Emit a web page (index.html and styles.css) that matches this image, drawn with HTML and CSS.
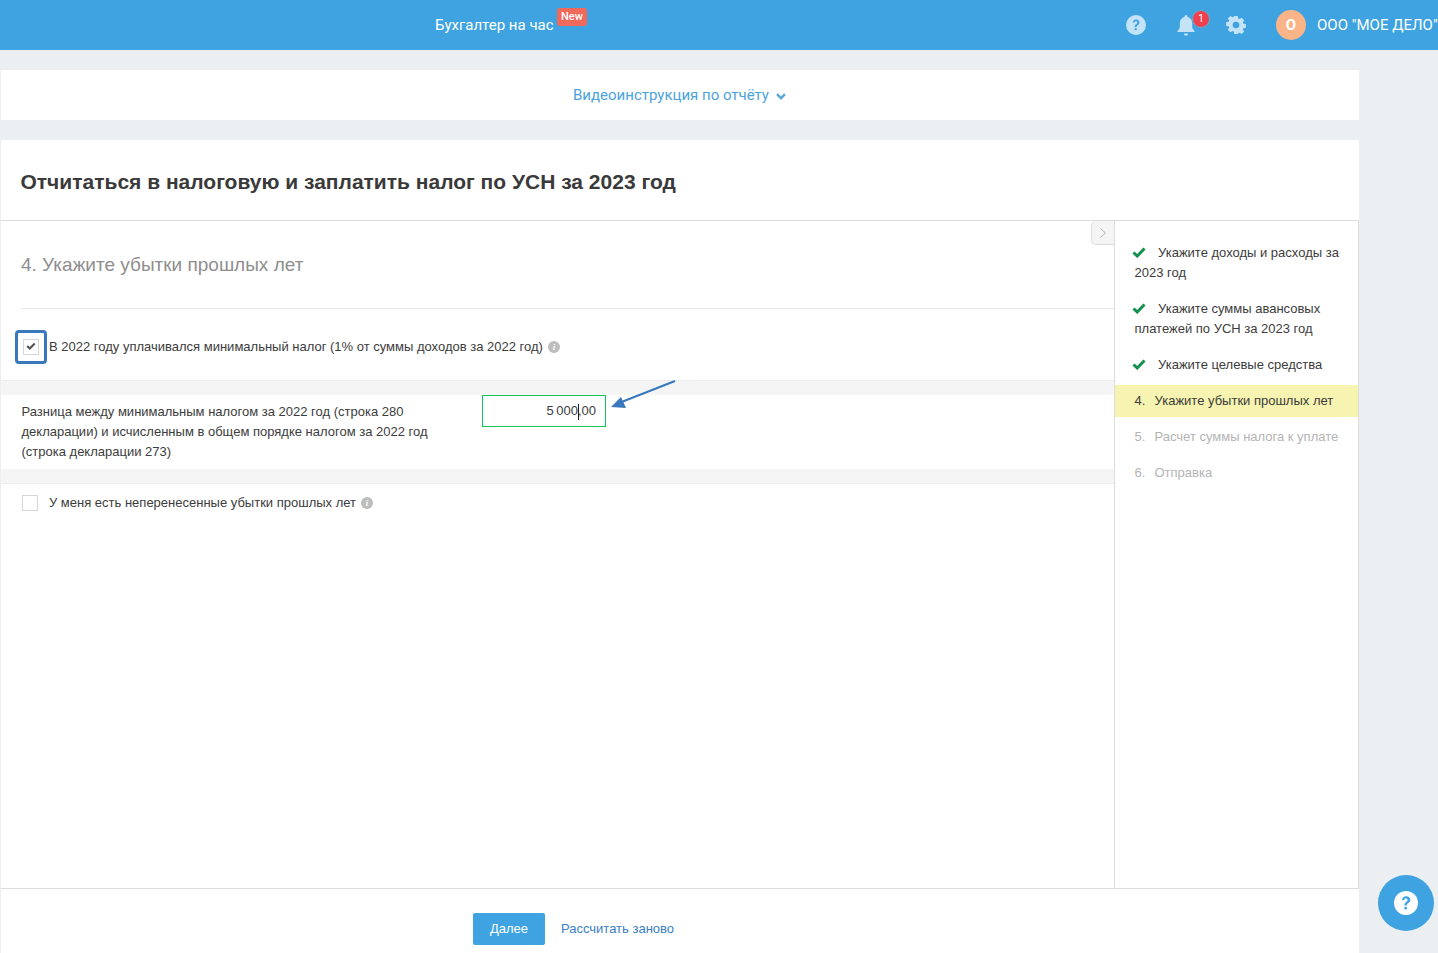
FILE: index.html
```html
<!DOCTYPE html>
<html lang="ru">
<head>
<meta charset="utf-8">
<title>Отчёт УСН</title>
<link rel="stylesheet" href="styles.css">
</head>
<body>
<header class="topbar">
  <div class="promo"><span class="promo-text">Бухгалтер на час</span><span class="new-badge">New</span></div>
  <div class="top-actions">
    <svg class="top-icon help-icon" viewBox="0 0 20 20"><circle cx="10" cy="10" r="10" fill="#c5e3f7"/><path d="M6.800 7.600C7 5.600 8.400 4.600 10.100 4.600c1.900 0 3.300 1.100 3.300 2.800 0 1.400-.8 2.100-1.800 2.800-.8.6-1 .9-1 1.800H8.700c0-1.500.4-2.100 1.400-2.800.8-.6 1.200-1 1.200-1.700 0-.7-.5-1.200-1.300-1.200-.8 0-1.300.5-1.400 1.300z" fill="#3ea3e0"/><rect x="8.700" y="13.200" width="2" height="2" fill="#3ea3e0"/></svg>
    <div class="bell">
      <svg class="bell-icon" viewBox="0 0 20 21"><path d="M10 0a1.500 1.500 0 0 1 1.500 1.500v.6c2.900.7 4.700 3 4.700 6v3.500c0 1.700.7 2.900 2.300 4.400v1H1.500v-1c1.600-1.500 2.300-2.700 2.300-4.400V8.100c0-3 1.800-5.300 4.700-6v-.6A1.500 1.500 0 0 1 10 0zM7.800 18.600h4.400a2.200 2.200 0 0 1-4.400 0z" fill="#c5e3f7"/></svg>
      <span class="bell-count">1</span>
    </div>
    <svg class="top-icon gear-icon" viewBox="0 0 20 20"><path fill-rule="evenodd" d="M8 0h4l.5 2.700 1.500.7 2.300-1.500 2.800 2.800-1.500 2.300.7 1.500 2.700.5v4l-2.700.5-.7 1.500 1.500 2.300-2.800 2.800-2.300-1.500-1.500.7L12 20H8l-.5-2.700-1.500-.7-2.300 1.500L.9 15.300l1.500-2.300-.7-1.500L-1 11V7l2.700-.5.700-1.500L.9 2.700 3.700-.1 6 1.400l1.500-.7zM10 6.300a3.700 3.700 0 1 0 0 7.400 3.700 3.700 0 0 0 0-7.400z" fill="#c5e3f7" transform="translate(1 1) scale(.9)"/></svg>
    <div class="user"><span class="avatar">О</span><span class="user-name">ООО "МОЕ ДЕЛО"</span></div>
  </div>
</header>

<main class="page">
  <section class="video-panel">
    <a class="video-link">Видеоинструкция по отчёту</a>
    <svg class="chevron" viewBox="0 0 10 7"><path d="M1 1.200l4 4 4-4" fill="none" stroke="#5aa9dc" stroke-width="2.400"/></svg>
  </section>

  <section class="report">
    <h1 class="report-title">Отчитаться в налоговую и заплатить налог по УСН за 2023 год</h1>
    <div class="report-body">
      <div class="content">
        <span class="collapse"><svg viewBox="0 0 8 12"><path d="M1.500 1.500L6.500 6l-5 4.500" fill="none" stroke="#b5b5b5" stroke-width="1"/></svg></span>
        <h2 class="step-title">4. Укажите убытки прошлых лет</h2>
        <div class="check-row first">
          <span class="focus-ring"><span class="checkbox checked"><svg viewBox="0 0 12 10"><path d="M1.500 4.500l3 3 6-6" fill="none" stroke="#555" stroke-width="2.600"/></svg></span></span>
          <span class="check-label">В 2022 году уплачивался минимальный налог (1% от суммы доходов за 2022 год)</span>
          <span class="info">i</span>
        </div>
        <div class="difference">
          <p class="difference-text">Разница между минимальным налогом за 2022 год (строка 280 декларации) и исчисленным в общем порядке налогом за 2022 год (строка декларации 273)</p>
          <div class="amount"><span>5 000</span><i class="caret"></i><span>,00</span></div>
          <svg class="arrow" viewBox="0 0 68 32"><path d="M66 1L10 23" stroke="#3a78bd" stroke-width="2" fill="none"/><path d="M2 27l10-10 5 11z" fill="#3a78bd"/></svg>
        </div>
        <div class="check-row second">
          <span class="checkbox"></span>
          <span class="check-label">У меня есть неперенесенные убытки прошлых лет</span>
          <span class="info">i</span>
        </div>
      </div>
      <aside class="steps">
        <ol class="step-list">
          <li class="step done"><svg class="tick" viewBox="0 0 14 11"><path d="M1.500 5.500l3.700 3.500 7.300-7.500" fill="none" stroke="#11924f" stroke-width="3"/></svg>Укажите доходы и расходы за 2023 год</li>
          <li class="step done"><svg class="tick" viewBox="0 0 14 11"><path d="M1.500 5.500l3.700 3.500 7.300-7.500" fill="none" stroke="#11924f" stroke-width="3"/></svg>Укажите суммы авансовых платежей по УСН за 2023 год</li>
          <li class="step done"><svg class="tick" viewBox="0 0 14 11"><path d="M1.500 5.500l3.700 3.500 7.300-7.500" fill="none" stroke="#11924f" stroke-width="3"/></svg>Укажите целевые средства</li>
          <li class="step current"><span class="num">4.</span>Укажите убытки прошлых лет</li>
          <li class="step todo"><span class="num">5.</span>Расчет суммы налога к уплате</li>
          <li class="step todo"><span class="num">6.</span>Отправка</li>
        </ol>
      </aside>
    </div>
    <footer class="report-footer">
      <button class="next-btn">Далее</button>
      <a class="recalc">Рассчитать заново</a>
    </footer>
  </section>
</main>

<button class="chat-btn" aria-label="Помощь">
  <svg viewBox="0 0 26 26"><circle cx="13" cy="13" r="12" fill="#fff"/><path d="M9 10.300C9.200 7.700 11 6.300 13.200 6.300c2.400 0 4.100 1.400 4.100 3.500 0 1.800-1 2.600-2.200 3.500-1 .7-1.300 1.200-1.300 2.300h-2.400c0-1.900.5-2.700 1.700-3.600 1-.7 1.500-1.200 1.500-2.100 0-.9-.6-1.500-1.600-1.500-1 0-1.700.6-1.800 1.700z" fill="#3ea3e0"/><rect x="11.400" y="16.900" width="2.500" height="2.500" fill="#3ea3e0"/></svg>
</button>
</body>
</html>
```
FILE: styles.css
```css
* { box-sizing: border-box; }
html, body { margin: 0; height: 953px; overflow: hidden; }
body { background: #ebeff2; font-family: Roboto, "Liberation Sans", sans-serif; color: #333; position: relative; }

.topbar { height: 50px; background: #3ea3e0; color: #fff; display: flex; align-items: center; padding-left: 435px; }
.promo { display: flex; position: relative; }
.promo-text { font-size: 15px; line-height: 18px; }
.new-badge { position: absolute; left: 122px; top: -8px; width: 30px; height: 18px; background: #f0695a; border-radius: 3px; font-size: 11px; font-weight: 500; line-height: 17px; text-align: center; }
.top-actions { margin-left: auto; display: flex; align-items: center; }
.top-icon { width: 20px; height: 20px; display: block; }
.help-icon { margin-right: 30px; }
.gear-icon { margin-left: 17px; margin-right: 30px; }
.bell { width: 33px; height: 24px; position: relative; }
.bell-icon { position: absolute; left: 0; top: 2px; width: 20px; height: 21px; }
.bell-count { position: absolute; left: 16px; top: -3px; width: 18px; height: 18px; border-radius: 50%; background: #ef4050; border: 1px solid #6fa9cf; font-size: 10px; line-height: 16px; text-align: center; color: #fff; }
.user { display: flex; align-items: center; width: 162px; white-space: nowrap; overflow: hidden; }
.avatar { width: 30px; height: 30px; flex: none; border-radius: 50%; background: #fbb488; font-size: 15px; font-weight: 700; line-height: 30px; text-align: center; margin-right: 11px; }
.user-name { font-size: 15px; }

.page { width: 1359px; padding: 20px 0 0 1px; }
.video-panel { height: 50px; background: #fff; display: flex; align-items: center; justify-content: center; gap: 7px; padding-right: 1px; }
.video-link { font-size: 15px; color: #4ba3de; }
.chevron { width: 10px; height: 7px; margin-top: 2px; }

.report { margin-top: 20px; height: 813px; background: #fff; display: flex; flex-direction: column; font-family: "Liberation Sans", Arial, sans-serif; }
.report-title { margin: 0; height: 81px; padding: 0 20px 0 19.5px; border-bottom: 1px solid #dcdcdc; font-size: 21px; font-weight: 700; line-height: 84px; color: #3a3a3a; }
.report-body { height: 668px; display: flex; border-bottom: 1px solid #dcdcdc; }
.content { width: 1114px; flex: none; position: relative; border-right: 1px solid #dcdcdc; }
.collapse { position: absolute; right: 0; top: 0; width: 23px; height: 24px; background: #f5f5f5; border: 1px solid #dcdcdc; border-top: 0; border-right: 0; border-radius: 5px 0 0 5px; display: flex; align-items: center; justify-content: center; }
.collapse svg { width: 8px; height: 12px; }
.step-title { margin: 0 0 0 20px; height: 88px; border-bottom: 1px solid #e6e6e6; font-size: 19px; font-weight: 400; line-height: 87px; color: #8e8e8e; }

.check-row { display: flex; align-items: center; font-size: 13px; line-height: 20px; color: #3c3c3c; }
.check-row.first { height: 72px; padding-left: 14px; border-bottom: 1px solid #ececec; padding-top: 4px; }
.check-row.second { height: 37px; padding-left: 21px; padding-top: 1px; border-top: 1px solid #ececec; }
.focus-ring { width: 32px; height: 34px; margin-right: 2px; border: 3px solid #3a78bd; border-radius: 4px; display: flex; align-items: center; justify-content: center; }
.checkbox { width: 16px; height: 16px; flex: none; border: 1px solid #d6d6d6; display: flex; align-items: center; justify-content: center; background: #fff; }
.second .checkbox { margin-right: 11px; }
.checkbox svg { width: 10px; height: 9px; }
.check-label { white-space: nowrap; }
.info { width: 12px; height: 12px; margin-left: 5px; flex: none; border-radius: 50%; background: #bdbdbd; color: #fff; font: italic 700 9px/12px "Liberation Serif", serif; text-align: center; }

.difference { height: 102px; border-top: 14px solid #f5f5f5; border-bottom: 14px solid #f5f5f5; padding-left: 20.5px; display: flex; position: relative; }
.difference-text { margin: 7px 0 0; width: 420px; font-size: 13px; line-height: 20px; color: #3c3c3c; }
.amount { margin: 0 0 0 40.5px; width: 124px; height: 32px; border: 1px solid #18c45c; font-size: 13px; line-height: 30px; display: flex; justify-content: flex-end; padding-right: 9px; word-spacing: -1px; color: #3c3c3c; }
.caret { width: 1px; height: 16px; background: #222; margin: 8px -1px 0 0; }
.arrow { position: absolute; left: 608px; top: -15px; width: 68px; height: 32px; }

.steps { width: 244px; flex: none; border-right: 1px solid #dcdcdc; }
.step-list { list-style: none; margin: 0; padding: 22px 0 0; font-size: 13px; line-height: 20px; }
.step { padding: 0 14px 0 19.5px; margin-bottom: 16px; }
.done { color: #3c3c3c; }
.tick { width: 14px; height: 11px; margin: 0 12px 0 -2.500px; vertical-align: -1px; }
.current { background: #f6f4b0; height: 32px; line-height: 32px; margin-top: -6px; margin-bottom: 4px; color: #3c3c3c; white-space: nowrap; }
.todo { height: 32px; line-height: 32px; margin-bottom: 4px; color: #b4b4b4; white-space: nowrap; }
.num { display: inline-block; width: 20px; }

.report-footer { flex: 1; display: flex; align-items: flex-start; padding: 24px 0 0 472px; }
.next-btn { width: 72px; height: 32px; background: #3ea3e0; border: 0; border-radius: 2px; color: #fff; font: 13px "Liberation Sans", sans-serif; padding: 0 0 2px; }
.recalc { margin-left: 16px; font-size: 13px; line-height: 32px; color: #3a80c4; }

.chat-btn { position: absolute; left: 1378px; top: 875px; width: 56px; height: 56px; border: 0; border-radius: 50%; background: #3ea3e0; display: flex; align-items: center; justify-content: center; padding: 0; }
.chat-btn svg { width: 26px; height: 26px; }
```
